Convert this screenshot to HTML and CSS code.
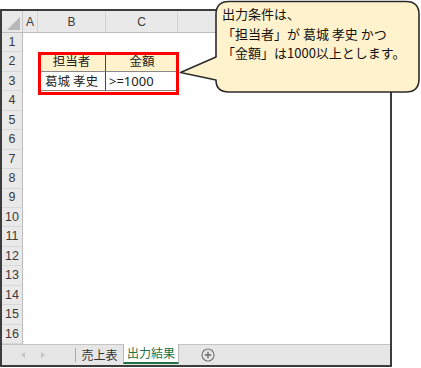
FILE: index.html
```html
<!DOCTYPE html>
<html lang="ja">
<head>
<meta charset="utf-8">
<link rel="stylesheet" href="styles.css">
</head>
<body>
<div class="page">
  <div class="window">
    <div class="colhead">
      <div class="corner"><span class="tri"></span></div>
      <div class="ch ch-a">A</div>
      <div class="ch ch-b">B</div>
      <div class="ch ch-c">C</div>
      <div class="ch ch-d"></div>
    </div>
    <div class="sheet">
      <div class="rh" style="grid-row:1">1</div>
      <div class="rh" style="grid-row:2">2</div>
      <div class="rh" style="grid-row:3">3</div>
      <div class="rh" style="grid-row:4">4</div>
      <div class="rh" style="grid-row:5">5</div>
      <div class="rh" style="grid-row:6">6</div>
      <div class="rh" style="grid-row:7">7</div>
      <div class="rh" style="grid-row:8">8</div>
      <div class="rh" style="grid-row:9">9</div>
      <div class="rh" style="grid-row:10">10</div>
      <div class="rh" style="grid-row:11">11</div>
      <div class="rh" style="grid-row:12">12</div>
      <div class="rh" style="grid-row:13">13</div>
      <div class="rh" style="grid-row:14">14</div>
      <div class="rh" style="grid-row:15">15</div>
      <div class="rh" style="grid-row:16">16</div>
      <div class="cell hdr b2">担当者</div>
      <div class="cell hdr c2">金額</div>
      <div class="cell b3">葛城 孝史</div>
      <div class="cell c3">&gt;=1000</div>
      <div class="redbox"></div>
    </div>
    <div class="tabbar">
      <div class="nav">
        <span class="arrow left"></span>
        <span class="arrow right"></span>
      </div>
      <div class="tab">売上表</div>
      <div class="tab active">出力結果</div>
      <div class="addtab">
        <svg width="14" height="14" viewBox="0 0 14 14"><circle cx="7" cy="7" r="6" fill="none" stroke="#7a7a7a" stroke-width="1.2"/><path d="M7 3.8v6.4M3.8 7h6.4" stroke="#6a6a6a" stroke-width="1.4"/></svg>
      </div>
    </div>
  </div>
  <div class="callout">
    <svg class="bubble" width="243" height="96" viewBox="0 0 243 96">
      <path d="M51 1.5 H228 Q241 1.5 241 14.5 V79 Q241 92 228 92 H51 Q38 92 38 80 L2.5 72.5 L38 57 V14.5 Q38 1.5 51 1.5 Z" fill="#fff2cc" stroke="#2b2b2b" stroke-width="1.6" stroke-linejoin="round"/>
    </svg>
    <div class="ctext">
      <div>出力条件は、</div>
      <div>「担当者」が 葛城 孝史 かつ</div>
      <div>「金額」は1000以上とします。</div>
    </div>
  </div>
</div>
</body>
</html>
```

FILE: styles.css
```css
* { box-sizing: border-box; }
html, body { margin: 0; padding: 0; background: #fff; }
body {
  width: 421px;
  height: 368px;
  overflow: hidden;
  font-family: "Noto Sans CJK JP", "Noto Sans", sans-serif;
}
.page {
  position: relative;
  width: 421px;
  height: 368px;
  padding-top: 9px;
}
.window {
  position: relative;
  width: 392px;
  height: 358px;
  border: 2px solid #3c3c3c;
  display: flex;
  flex-direction: column;
  background: #fff;
}
.colhead {
  height: 22px;
  display: grid;
  grid-template-columns: 21px 15px 68px 72px 1fr;
  background: #e9e9e9;
  border-bottom: 1px solid #bcbcbc;
  flex: none;
}
.corner {
  position: relative;
  border-right: 1px solid #c8c8c8;
}
.tri {
  position: absolute;
  right: 2px;
  bottom: 2px;
  width: 0;
  height: 0;
  border-left: 13px solid transparent;
  border-bottom: 13px solid #b8b8b8;
}
.ch {
  border-right: 1px solid #d4d4d4;
  font-family: "Liberation Sans", "Noto Sans", sans-serif;
  font-size: 12px;
  line-height: 1;
  color: #3a3a3a;
  display: flex;
  align-items: center;
  justify-content: center;
}
.ch-d { border-right: none; }
.sheet {
  position: relative;
  flex: 1 1 0;
  min-height: 0;
  display: grid;
  grid-template-columns: 21px 15px 68px 72px 1fr;
  grid-template-rows: repeat(16, minmax(0, 1fr));
}
.rh {
  grid-column: 1;
  background: #e9e9e9;
  border-right: 1px solid #bcbcbc;
  border-bottom: 1px solid #d8d8d8;
  font-family: "Liberation Sans", "Noto Sans", sans-serif;
  font-size: 12.5px;
  line-height: 1;
  color: #3a3a3a;
  display: flex;
  align-items: center;
  justify-content: center;
}
.cell {
  font-size: 12.5px;
  line-height: 1;
  color: #222;
  display: flex;
  align-items: center;
  justify-content: center;
  border-bottom: 1px solid #888;
}
.hdr { background: #fff2cc; }
.b2 { grid-row: 2; grid-column: 3; border-right: 1px solid #444; }
.c2 { grid-row: 2; grid-column: 4; }
.b3 { grid-row: 3; grid-column: 3; border-right: 1px solid #444; }
.c3 {
  grid-row: 3; grid-column: 4;
  justify-content: flex-start;
  padding-left: 3px;
  font-family: "Noto Sans", "Noto Sans CJK JP", sans-serif;
  font-size: 13px;
}
.redbox {
  position: absolute;
  left: 35.5px;
  top: 18.5px;
  width: 141px;
  height: 43px;
  border: 3px solid #ff0000;
  pointer-events: none;
}
.tabbar {
  height: 21px;
  flex: none;
  display: flex;
  background: #e6e6e6;
  border-top: 1px solid #c4c4c4;
}
.nav {
  width: 74px;
  display: flex;
  align-items: center;
  gap: 16px;
  padding-left: 19px;
  border-right: 1px solid #aaa;
  margin: 3px 0;
}
.arrow {
  width: 0;
  height: 0;
  border-top: 3.5px solid transparent;
  border-bottom: 3.5px solid transparent;
}
.arrow.left { border-right: 4px solid #c4c4c4; }
.arrow.right { border-left: 4px solid #c4c4c4; }
.tab {
  width: 47px;
  font-size: 12px;
  line-height: 14px;
  color: #333;
  display: flex;
  align-items: center;
  justify-content: center;
}
.tab.active {
  width: 56px;
  background: #fff;
  color: #217346;
  border-left: 1px solid #b8b8b8;
  border-right: 1px solid #b8b8b8;
  margin-top: -1px;
  border-bottom: 2px solid #217346;
  margin-bottom: 1px;
}
.addtab {
  display: flex;
  align-items: center;
  padding-left: 22px;
}
.callout {
  position: absolute;
  left: 178px;
  top: 0;
  width: 243px;
  height: 96px;
}
.bubble { display: block; }
.ctext {
  position: absolute;
  left: 44px;
  top: 4px;
  font-size: 13px;
  line-height: 19.5px;
  color: #111;
  letter-spacing: 0;
}
```
